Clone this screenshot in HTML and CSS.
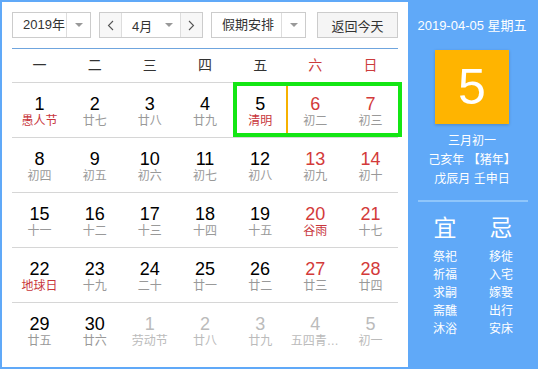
FILE: index.html
```html
<!DOCTYPE html>
<html lang="zh-CN">
<head>
    <meta charset="UTF-8">
    <meta name="viewport" content="width=device-width, initial-scale=1.0">
    <title>万年历</title>
    <link rel="stylesheet" href="styles.css">
</head>
<body>
    <div class="calendar">
        <div class="main">
            <div class="toolbar">
                <div class="select year-select">
                    <span class="select-text">2019年</span>
                    <span class="select-arrow"><i class="caret"></i></span>
                </div>
                <div class="month-picker">
                    <span class="nav">
                        <svg width="7" height="11" viewBox="0 0 7 11"><polyline points="6,1 1.5,5.5 6,10" fill="none" stroke="#555" stroke-width="1.1"/></svg>
                    </span>
                    <span class="month-select">
                        <span>4月</span>
                        <i class="caret"></i>
                    </span>
                    <span class="nav">
                        <svg width="7" height="11" viewBox="0 0 7 11"><polyline points="1,1 5.5,5.5 1,10" fill="none" stroke="#555" stroke-width="1.1"/></svg>
                    </span>
                </div>
                <div class="select holiday-select">
                    <span class="select-text">假期安排</span>
                    <span class="select-arrow"><i class="caret"></i></span>
                </div>
                <button class="today-btn">返回今天</button>
            </div>

            <div class="weekdays">
                <span>一</span><span>二</span><span>三</span><span>四</span><span>五</span>
                <span class="weekend">六</span><span class="weekend">日</span>
            </div>

            <div class="days">
                <div class="holiday-range"></div>

                <div class="week">
                    <div class="day"><b>1</b><span class="lunar festival">愚人节</span></div>
                    <div class="day"><b>2</b><span class="lunar">廿七</span></div>
                    <div class="day"><b>3</b><span class="lunar">廿八</span></div>
                    <div class="day"><b>4</b><span class="lunar">廿九</span></div>
                    <div class="day today"><b>5</b><span class="lunar festival">清明</span></div>
                    <div class="day weekend"><b>6</b><span class="lunar">初二</span></div>
                    <div class="day weekend"><b>7</b><span class="lunar">初三</span></div>
                </div>
                <div class="week">
                    <div class="day"><b>8</b><span class="lunar">初四</span></div>
                    <div class="day"><b>9</b><span class="lunar">初五</span></div>
                    <div class="day"><b>10</b><span class="lunar">初六</span></div>
                    <div class="day"><b>11</b><span class="lunar">初七</span></div>
                    <div class="day"><b>12</b><span class="lunar">初八</span></div>
                    <div class="day weekend"><b>13</b><span class="lunar">初九</span></div>
                    <div class="day weekend"><b>14</b><span class="lunar">初十</span></div>
                </div>
                <div class="week">
                    <div class="day"><b>15</b><span class="lunar">十一</span></div>
                    <div class="day"><b>16</b><span class="lunar">十二</span></div>
                    <div class="day"><b>17</b><span class="lunar">十三</span></div>
                    <div class="day"><b>18</b><span class="lunar">十四</span></div>
                    <div class="day"><b>19</b><span class="lunar">十五</span></div>
                    <div class="day weekend"><b>20</b><span class="lunar festival">谷雨</span></div>
                    <div class="day weekend"><b>21</b><span class="lunar">十七</span></div>
                </div>
                <div class="week">
                    <div class="day"><b>22</b><span class="lunar festival">地球日</span></div>
                    <div class="day"><b>23</b><span class="lunar">十九</span></div>
                    <div class="day"><b>24</b><span class="lunar">二十</span></div>
                    <div class="day"><b>25</b><span class="lunar">廿一</span></div>
                    <div class="day"><b>26</b><span class="lunar">廿二</span></div>
                    <div class="day weekend"><b>27</b><span class="lunar">廿三</span></div>
                    <div class="day weekend"><b>28</b><span class="lunar">廿四</span></div>
                </div>
                <div class="week">
                    <div class="day"><b>29</b><span class="lunar">廿五</span></div>
                    <div class="day"><b>30</b><span class="lunar">廿六</span></div>
                    <div class="day other"><b>1</b><span class="lunar">劳动节</span></div>
                    <div class="day other"><b>2</b><span class="lunar">廿八</span></div>
                    <div class="day other"><b>3</b><span class="lunar">廿九</span></div>
                    <div class="day other"><b>4</b><span class="lunar">五四青年节</span></div>
                    <div class="day other"><b>5</b><span class="lunar">初一</span></div>
                </div>
            </div>
        </div>

        <div class="side">
            <div class="side-date">2019-04-05 星期五</div>
            <div class="side-day">5</div>
            <div class="side-lunar">
                <p>三月初一</p>
                <p>己亥年 【猪年】</p>
                <p>戊辰月 壬申日</p>
            </div>
            <div class="side-line"></div>
            <div class="almanac">
                <div class="almanac-col">
                    <h2>宜</h2>
                    <p>祭祀</p><p>祈福</p><p>求嗣</p><p>斋醮</p><p>沐浴</p>
                </div>
                <div class="almanac-col">
                    <h2>忌</h2>
                    <p>移徙</p><p>入宅</p><p>嫁娶</p><p>出行</p><p>安床</p>
                </div>
            </div>
        </div>
    </div>
</body>
</html>
```

FILE: styles.css
```css
body {
    margin: 0;
    font-family: "Liberation Sans", "Noto Sans CJK SC", sans-serif;
    color: #333;
}

.calendar {
    display: flex;
    width: 538px;
    height: 369px;
    box-sizing: border-box;
    border: 2px solid #60a9f8;
    background: #60a9f8;
}

.main {
    width: 406px;
    box-sizing: border-box;
    padding: 10px 10px 0;
    background: #fff;
}

/* toolbar */
.toolbar {
    display: flex;
    height: 26px;
    gap: 8px;
    margin-bottom: 10px;
    font-size: 13px;
}

.select,
.month-picker {
    display: flex;
    box-sizing: border-box;
    border: 1px solid #ccc;
    background: #fff;
}

.year-select {
    width: 79px;
}

.holiday-select {
    width: 95px;
}

.select-text {
    flex: 1;
    padding-left: 10px;
    line-height: 24px;
    border-right: 1px solid #ddd;
}

.select-arrow {
    display: flex;
    width: 23px;
    align-items: center;
    justify-content: center;
}

.caret {
    width: 0;
    height: 0;
    border-left: 4px solid transparent;
    border-right: 4px solid transparent;
    border-top: 4px solid #999;
}

.month-picker {
    width: 104px;
}

.nav {
    display: flex;
    width: 21px;
    align-items: center;
    justify-content: center;
    background: #f7f7f7;
}

.month-select {
    display: flex;
    flex: 1;
    align-items: center;
    justify-content: space-between;
    padding: 0 7px 0 10px;
    border-left: 1px solid #ddd;
    border-right: 1px solid #ddd;
}

.today-btn {
    width: 81px;
    margin-left: auto;
    padding: 0;
    border: 1px solid #ccc;
    background: #f5f5f5;
    font-family: inherit;
    font-size: 13px;
    color: #333;
}

/* weekday header */
.weekdays {
    display: grid;
    grid-template-columns: repeat(7, minmax(0, 1fr));
    height: 33px;
    border-top: 1px solid #6fa5de;
    border-bottom: 1px solid #d6d6d6;
    font-size: 14px;
    line-height: 33px;
    text-align: center;
    color: #333;
}

.weekdays .weekend {
    color: #cc3c3c;
}

/* day grid */
.days {
    position: relative;
}

.week {
    display: grid;
    grid-template-columns: repeat(7, minmax(0, 1fr));
    height: 54px;
    border-bottom: 1px solid #d6d6d6;
}

.week:last-child {
    border-bottom: none;
}

.day {
    min-width: 0;
    padding-top: 11px;
    box-sizing: border-box;
    text-align: center;
}

.day b {
    display: block;
    font-size: 18px;
    font-weight: normal;
    line-height: 20px;
    color: #000;
}

.lunar {
    display: block;
    padding: 0 3px;
    font-size: 12px;
    line-height: 15px;
    color: #999;
    white-space: nowrap;
    overflow: hidden;
    text-overflow: ellipsis;
}

.lunar.festival {
    color: #c8363c;
}

.day.weekend b {
    color: #d33a3a;
}

.day.other b,
.day.other .lunar {
    color: #bbb;
}

.day.today {
    box-shadow: inset 0 0 0 2px #f6b100;
}

.holiday-range {
    position: absolute;
    top: -1px;
    left: calc(400% / 7);
    width: calc(300% / 7 + 4px);
    height: 55px;
    box-sizing: border-box;
    border: 4px solid #14e614;
    pointer-events: none;
}

/* side panel */
.side {
    flex: 1;
    color: #fff;
    text-align: center;
}

.side-date {
    margin-top: 14px;
    font-size: 13px;
    line-height: 20px;
}

.side-day {
    display: flex;
    width: 74px;
    height: 74px;
    margin: 14px auto 0;
    align-items: center;
    justify-content: center;
    background: #ffb400;
    box-shadow: 0 1px 3px rgba(0, 0, 0, 0.2);
    font-size: 50px;
    line-height: 1;
}

.side-lunar {
    margin-top: 8px;
    font-size: 12px;
    line-height: 19px;
}

.side-lunar p {
    margin: 0;
}

.side-line {
    height: 2px;
    margin: 11px 8px 0 10px;
    background: #8fc6fb;
}

.almanac {
    display: flex;
    justify-content: center;
    padding-left: 2px;
    margin-top: 12px;
}

.almanac-col {
    width: 56px;
}

.almanac-col h2 {
    margin: 0 0 6px;
    font-size: 23px;
    font-weight: normal;
    line-height: 28px;
}

.almanac-col p {
    margin: 0;
    font-size: 12px;
    line-height: 18px;
}
```
